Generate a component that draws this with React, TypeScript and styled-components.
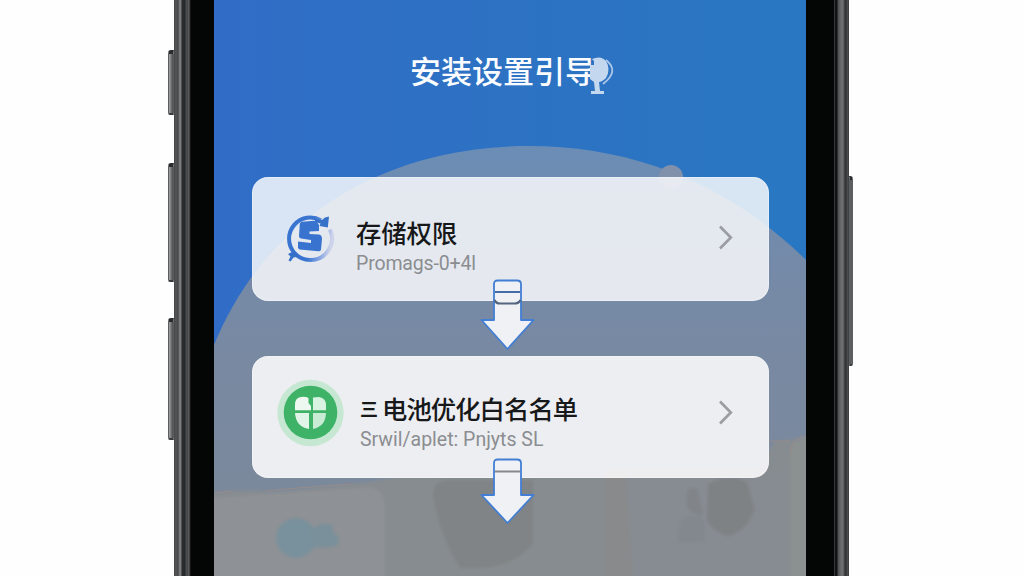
import React from 'react';
import styled, { createGlobalStyle } from 'styled-components';

const GlobalStyle = createGlobalStyle`
  * {
    box-sizing: border-box;
  }

  body {
    margin: 0;
    background: #fefefe;
    font-family: Roboto, 'Noto Sans CJK SC', sans-serif;
  }
`;

const Page = styled.div`
  display: flex;
  width: 1024px;
  height: 576px;
  padding-left: 168px;
  overflow: hidden;
`;

const ButtonColumn = styled.div<{ $top: number }>`
  display: flex;
  flex-direction: column;
  width: 6px;
  padding-top: ${props => props.$top}px;
`;

const SideButton = styled.div<{ $height: number; $gap?: number; $right?: boolean }>`
  flex: none;
  height: ${props => props.$height}px;
  margin-bottom: ${props => props.$gap || 0}px;
  width: ${props => (props.$right ? 4 : 6)}px;
  border: 1px solid #5c5e60;
  border-top: 4px solid #292b2d;
  border-bottom: 2px solid #38393b;
  border-radius: ${props => (props.$right ? '0 3px 2px 0' : '3px 0 0 2px')};
  background: ${props =>
    props.$right ? '#5c5e60' : 'linear-gradient(90deg, #a0a2a3, #77797a 50%, #47494b)'};
`;

const Rail = styled.div<{ $right?: boolean }>`
  flex: none;
  width: ${props => (props.$right ? 15 : 17)}px;
  background: ${props =>
    props.$right
      ? 'linear-gradient(90deg, #343638 0 1px, #111213 1px 3px, #4a4c4d 4px, #626465 6px, #707273 9px, #4b4d4e 10px, #292b2c 12px, #4e5051 13px, #3a3c3d)'
      : 'linear-gradient(90deg, #414345 0, #555759 2px, #434547 4px, #8a8c8e 6px, #6d6f70 7px, #2c2e2f 8px, #252627 11px, #4c5052 12px, #424343 14px, #6a6b6c 15px, #161616 16px)'};
`;

const Bezel = styled.div<{ $width: number }>`
  flex: none;
  width: ${props => props.$width}px;
  background: #040505;
`;

const Screen = styled.main`
  position: relative;
  flex: none;
  width: 592px;
  height: 576px;
  overflow: hidden;
`;

const Wallpaper = styled.svg`
  position: absolute;
  inset: 0;
`;

const Content = styled.div`
  position: relative;
  display: flex;
  flex-direction: column;
  padding: 0 37px 0 38px;
`;

const Header = styled.header`
  display: flex;
  height: 177px;
  padding: 47px 0 0 158px;
`;

const Title = styled.h1`
  margin: 0;
  height: 46px;
  line-height: 46px;
  font-family: 'Noto Sans CJK SC', sans-serif;
  font-size: 31px;
  font-weight: 500;
  color: #fafcff;
  white-space: nowrap;
`;

const HeaderMark = styled.svg`
  flex: none;
  margin: 9px 0 0 -7px;
`;

const Card = styled.section<{ $height: number; $strong?: boolean }>`
  position: relative;
  display: flex;
  height: ${props => props.$height}px;
  padding-right: 34px;
  margin-bottom: 55px;
  border-radius: 16px;
  background: ${props => (props.$strong ? 'rgba(254, 253, 254, 0.87)' : 'rgba(250, 251, 253, 0.84)')};
  box-shadow: inset 0 0 1px 1px rgba(255, 255, 255, 0.35);
`;

const IconSlot = styled.div<{ $wide?: boolean }>`
  flex: none;
  width: ${props => (props.$wide ? 108 : 104)}px;
  padding: ${props => (props.$wide ? '22px 0 0 25px' : '34px 0 0 32px')};
`;

const Copy = styled.div<{ $top: number }>`
  flex: 1;
  padding-top: ${props => props.$top}px;
`;

const CardTitle = styled.h2<{ $spacing?: number }>`
  display: flex;
  align-items: center;
  margin: 0;
  height: 36px;
  font-family: 'Noto Sans CJK SC', sans-serif;
  font-size: 25.3px;
  font-weight: 500;
  letter-spacing: ${props => props.$spacing || 0}px;
  color: #171819;
  white-space: nowrap;
`;

const Prefix = styled.span`
  width: 22px;
  font-size: 18px;
  font-weight: 700;
`;

const CardNote = styled.p<{ $spacing: number }>`
  margin: 3px 0 0;
  line-height: 22px;
  font-size: 19.5px;
  letter-spacing: ${props => props.$spacing}px;
  color: #8b8d91;
  white-space: nowrap;
`;

const Chevron = styled.svg<{ $top: number }>`
  flex: none;
  margin-top: ${props => props.$top}px;
`;

const StepArrow = styled.svg`
  position: absolute;
  left: 227px;
  top: 101px;
  z-index: 1;
`;

function WallpaperArt() {
  return (
    <Wallpaper width="592" height="576" viewBox="0 0 592 576">
      <defs>
        <linearGradient id="sky" x1="0" y1="0" x2="1" y2="0">
          <stop offset="0" stopColor="#316dc7" />
          <stop offset="0.5" stopColor="#2d72c3" />
          <stop offset="1" stopColor="#2977c2" />
        </linearGradient>
        <linearGradient id="hill" gradientUnits="userSpaceOnUse" x1="0" y1="146" x2="0" y2="490">
          <stop offset="0" stopColor="#6b8db5" />
          <stop offset="0.35" stopColor="#758aa8" />
          <stop offset="0.6" stopColor="#7889a2" />
          <stop offset="1" stopColor="#7b899c" />
        </linearGradient>
        <filter id="soft" x="-20%" y="-20%" width="140%" height="140%">
          <feGaussianBlur stdDeviation="1.8" />
        </filter>
      </defs>
      <rect width="592" height="576" fill="url(#sky)" />
      <path d="M0 345C52 218 170 146 314 146C424 146 518 187 592 260V576H0Z" fill="url(#hill)" />
      <circle cx="457" cy="177" r="12" fill="#8190ab" />
      <g filter="url(#soft)">
        <path d="M-5 494Q25 488 60 492L140 484Q170 480 180 477H540L560 442L600 437V582H-5Z" fill="#878c90" />
        <path d="M-5 498L153 487Q170 488 171 505V582H-5Z" fill="#8e9195" />
        <path d="M219 495Q219 480 236 480H319V544Q298 568 263 568H246Q225 535 219 495Z" fill="#808487" />
        <path d="M392 470H411L420 582H392Z" fill="#898a8b" />
        <path d="M411 470H577V582H420Z" fill="#878c92" />
        <path d="M576 582V456Q577 438 598 436V582Z" fill="#8b9091" />
        <ellipse cx="82" cy="538" rx="20" ry="20" fill="#79919c" />
        <path d="M96 530Q108 521 118 525L120 533Q128 538 124 545L119 547L100 548Z" fill="#7a909a" />
        <path d="M494 484Q514 472 533 482L541 510Q531 532 514 536Q497 531 493 519Z" fill="#7f8285" />
        <path d="M473 490Q478 486 484 489L489 516Q477 515 472 505Z" fill="#81858a" />
        <path d="M468 518Q480 512 491 521V543H462Z" fill="#83888e" />
      </g>
      <path
        d="M0 493L20 491M52 491Q90 487 140 484M555 441H576M577 454Q576 438 592 436"
        fill="none"
        stroke="#9b8c87"
        strokeWidth="1.2"
        opacity=".8"
      />
    </Wallpaper>
  );
}

function DownArrow({ second = false }: { second?: boolean }) {
  const headTop = second ? 38 : 42;
  const tip = second ? 66 : 71;
  return (
    <StepArrow width="58" height="74" viewBox="0 0 58 74">
      <path
        d={`M15 ${headTop}V6Q15 2.5 18.5 2.5H38Q42 2.5 42 6V${headTop}H54.5L28.5 ${tip}L2.5 ${headTop}Z`}
        fill="#f0f1f5"
        stroke="#427ed3"
        strokeWidth="1.8"
        strokeLinejoin="round"
      />
      <path d={second ? 'M16 14.5H41' : 'M16 14H41'} stroke={second ? '#85878d' : '#446da8'} strokeWidth="2" />
      {!second && (
        <path d="M15.5 22Q17 25.5 21 25.5H35Q40 25.5 41.5 22" fill="none" stroke="#53657f" strokeWidth="2.2" />
      )}
    </StepArrow>
  );
}

function StorageIcon() {
  return (
    <svg width="52" height="52" viewBox="0 0 52 52">
      <defs>
        <linearGradient id="ring" gradientUnits="userSpaceOnUse" x1="14" y1="30" x2="48" y2="36">
          <stop offset="0.35" stopColor="#3974d0" />
          <stop offset="0.7" stopColor="#86a4e2" />
          <stop offset="0.95" stopColor="#cdd3ea" />
        </linearGradient>
      </defs>
      <path
        d="M37 9.2A21.4 21.4 0 0 0 10 41.5Q16.5 49 26.5 49A21.4 21.4 0 0 0 46 18.5"
        fill="none"
        stroke="url(#ring)"
        strokeWidth="4"
      />
      <path d="M31 7.5L38 9L41 6.5L45 5.5L43.8 16.5L35.5 15L36.5 12.5L31 11Z" fill="#3570c9" />
      <path d="M4 43L10 40L15 45.5L9.5 46.5L6.5 50.5L4.5 49.5L6.5 45.5Z" fill="#3570c9" />
      <path
        d="M15.7 14Q15.7 11 18.5 10.7L30 9.8Q33 10 35 14V20L25.5 20.5V23L35 23.5Q38.2 24.2 38 28L37 38.5Q36.8 40.5 34.5 40.2L15.5 38.5L14 37V30.5L27 32V29L17 27.5Q15 27 15 25Z"
        fill="#3973d0"
      />
    </svg>
  );
}

function BatteryIcon() {
  return (
    <svg width="70" height="70" viewBox="0 0 70 70">
      <circle cx="33.5" cy="35" r="33.2" fill="#c6e8d2" />
      <circle cx="33.5" cy="34.5" r="26.8" fill="#3eb267" />
      <path d="M18 32.2V27Q18 19.5 24 19Q28 18 31.5 20V25L34 28V32.2Z" fill="#edf9f0" />
      <path d="M36 32.2V19.5L42 19Q49 20 49 27V32.2Z" fill="#d8f3e1" />
      <path d="M18 35H32V51Q19 49 18 35Z" fill="#e0f5e7" />
      <path d="M36 35H49Q48.5 48.5 36 51Z" fill="#c8ebd4" />
    </svg>
  );
}

function RightChevron({ top }: { top: number }) {
  return (
    <Chevron $top={top} width="18" height="28" viewBox="0 0 18 28">
      <path d="M3 2.5L13.8 13.5L3 24.5" fill="none" stroke="#9b9da2" strokeWidth="2.7" />
    </Chevron>
  );
}

export default function App() {
  return (
    <>
      <GlobalStyle />
      <Page>
        <ButtonColumn $top={50}>
          <SideButton $height={65} $gap={48} />
          <SideButton $height={119} $gap={36} />
          <SideButton $height={122} />
        </ButtonColumn>
        <Rail />
        <Bezel $width={23} />
        <Screen>
          <WallpaperArt />
          <Content>
            <Header>
              <Title>安装设置引导</Title>
              <HeaderMark width="30" height="40" viewBox="0 0 30 40">
                <path d="M3 3Q12 -1 17 5Q22 13 17 22Q13 26 10 26L11 35H15V38H2V35H6L5 26L1 23V9H5V5Z" fill="#c3d7ef" />
                <path d="M17 4Q31 15 14 28" fill="none" stroke="#a9c6e8" strokeWidth="1.9" />
              </HeaderMark>
            </Header>

            <Card $height={124}>
              <IconSlot>
                <StorageIcon />
              </IconSlot>
              <Copy $top={37}>
                <CardTitle>存储权限</CardTitle>
                <CardNote $spacing={-0.15}>Promags-0+4l</CardNote>
              </Copy>
              <RightChevron top={47} />
              <DownArrow />
            </Card>

            <Card $height={122} $strong>
              <IconSlot $wide>
                <BatteryIcon />
              </IconSlot>
              <Copy $top={34}>
                <CardTitle $spacing={-0.9}>
                  <Prefix>三</Prefix>
                  电池优化白名名单
                </CardTitle>
                <CardNote $spacing={0}>Srwil/aplet: Pnjyts SL</CardNote>
              </Copy>
              <RightChevron top={43} />
              <DownArrow second />
            </Card>
          </Content>
        </Screen>
        <Bezel $width={28} />
        <Rail $right />
        <ButtonColumn $top={176}>
          <SideButton $height={190} $right />
        </ButtonColumn>
      </Page>
    </>
  );
}
